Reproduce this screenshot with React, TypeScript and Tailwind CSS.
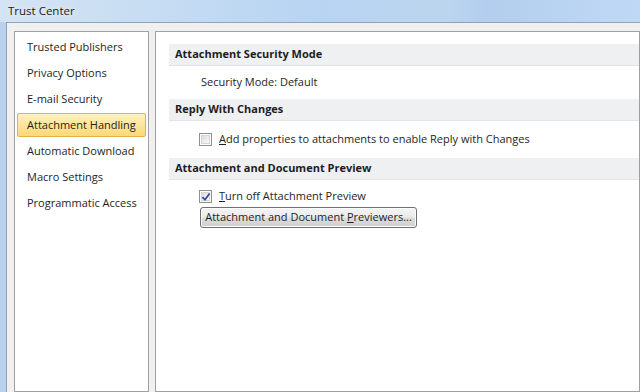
import type { ReactNode } from 'react';

const navItems = [
  'Trusted Publishers',
  'Privacy Options',
  'E-mail Security',
  'Attachment Handling',
  'Automatic Download',
  'Macro Settings',
  'Programmatic Access',
];

function SectionHeader({ children }: { children: ReactNode }) {
  return (
    <div className="h-[22px] flex items-center pl-[6px] bg-[#eef0f2] border-b border-[#e2e5e8] font-bold text-[#1e1e1e] whitespace-nowrap">
      {children}
    </div>
  );
}

function Checkbox({ checked }: { checked?: boolean }) {
  return (
    <span className="relative w-[13px] h-[13px] border border-[#8e8f8f] bg-white shrink-0 flex items-center justify-center">
      <span className="w-[9px] h-[9px] bg-[linear-gradient(135deg,#dcdcdc,#fbfbfb)] border border-[#d5d5d5]" />
      {checked && (
        <svg className="absolute left-[1px] top-[1px]" width="10" height="10" viewBox="0 0 10 10">
          <path d="M1.5 5.2 L4 7.8 L8.6 1.6" fill="none" stroke="#2c4a9c" strokeWidth="1.7" />
        </svg>
      )}
    </span>
  );
}

export default function App() {
  return (
    <div
      className="w-[640px] h-[392px] overflow-hidden flex flex-col bg-[#b9d1ea] text-[11px] text-[#1e1e1e]"
      style={{ fontFamily: '"Segoe UI", "Open Sans", "Noto Sans", sans-serif' }}
    >
      {/* Aero title bar */}
      <div className="h-[22px] shrink-0 flex items-center pl-[8px] bg-[linear-gradient(90deg,#d4e4f4_0%,#c6dcf2_25%,#b7d4f2_50%,#bcd5ee_70%,#b3cdee_76%,#bfd9f5_100%)]">
        <span className="text-[11.5px] text-[#1b1b1b] [text-shadow:0_0_6px_#ffffff]">Trust Center</span>
      </div>

      {/* Window body */}
      <div className="flex-1 flex ml-[6px] border-l border-t border-[#8fa3bb] bg-[#f0f0f0] pt-[8px] pl-[7px] gap-[6px]">
        {/* Left nav */}
        <div className="w-[135px] shrink-0 border border-[#a0a0a0] bg-white pt-[2px] px-[2px]">
          {navItems.map((item) => {
            const selected = item === 'Attachment Handling';
            return (
              <div key={item} className="h-[26px] py-[1px] whitespace-nowrap">
                <div
                  className={
                    selected
                      ? 'h-full flex items-center pl-[9px] rounded-[2px] border border-[#e3b34a] bg-[linear-gradient(180deg,#fef1c4_0%,#fde59a_50%,#fbd878_100%)]'
                      : 'h-full flex items-center pl-[9px] border border-transparent'
                  }
                >
                  {item}
                </div>
              </div>
            );
          })}
        </div>

        {/* Right content */}
        <div className="flex-1 border border-[#a0a0a0] bg-white pt-[12px] pl-[13px]">
          <SectionHeader>Attachment Security Mode</SectionHeader>
          <div className="h-[33px] flex items-center pl-[32px] whitespace-nowrap">Security Mode: Default</div>

          <SectionHeader>Reply With Changes</SectionHeader>
          <div className="h-[37px] flex items-center pl-[30px] gap-[7px] whitespace-nowrap">
            <Checkbox />
            <span>
              <span className="underline">A</span>dd properties to attachments to enable Reply with Changes
            </span>
          </div>

          <SectionHeader>Attachment and Document Preview</SectionHeader>
          <div className="pt-[9px] pl-[30px] flex flex-col items-start gap-[4px]">
            <div className="h-[14px] flex items-center gap-[7px] whitespace-nowrap">
              <Checkbox checked />
              <span>
                <span className="underline">T</span>urn off Attachment Preview
              </span>
            </div>
            <button className="w-[217px] h-[21px] ml-[1px] rounded-[3px] border border-[#707070] bg-[linear-gradient(180deg,#f4f4f4_0%,#ebebeb_48%,#dddddd_52%,#cfcfcf_100%)] shadow-[inset_0_0_0_1px_#fcfcfc] text-[11px] text-[#1e1e1e] whitespace-nowrap">
              <span>
                Attachment and Document <span className="underline">P</span>reviewers...
              </span>
            </button>
          </div>
        </div>
      </div>
    </div>
  );
}
